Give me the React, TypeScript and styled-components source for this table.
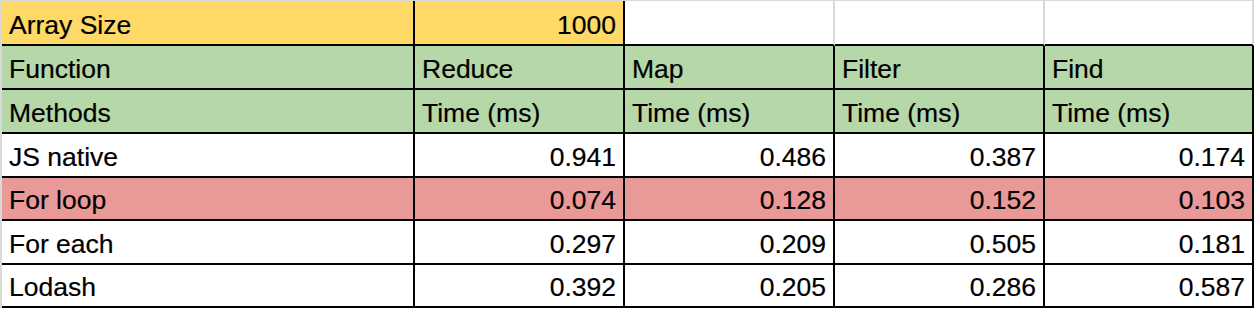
import React from 'react';
import styled, { createGlobalStyle } from 'styled-components';

const GlobalStyle = createGlobalStyle`
  html, body {
    margin: 0;
    padding: 0;
    background: #fff;
  }
`;

const Sheet = styled.div`
  display: grid;
  grid-template-columns: 413px 210px 210px 210px 209px;
  grid-template-rows: 45px 44px 44px 44px 43px 44px 43px;
  width: max-content;
  border-left: 2px solid #d9d9d9;
  border-top: 1px solid #d9d9d9;
  font-family: "Liberation Sans", Arial, sans-serif;
  font-size: 26.5px;
  line-height: 30px;
  color: #000;
  -webkit-text-stroke: 0.2px #000;
`;

const Cell = styled.div<{ $bg?: string; $right?: boolean; $grid?: boolean }>`
  box-sizing: border-box;
  display: flex;
  align-items: flex-end;
  justify-content: ${(p) => (p.$right ? 'flex-end' : 'flex-start')};
  padding: 0 7px 4px 7px;
  background: ${(p) => p.$bg || '#fff'};
  border-right: 2px solid ${(p) => (p.$grid ? '#d9d9d9' : '#000')};
  border-bottom: 2px solid #000;
  white-space: nowrap;
`;

const YELLOW = '#ffd966';
const GREEN = '#b6d7a8';
const RED = '#ea9999';

type DataRow = { label: string; values: string[]; bg?: string };

const rows: DataRow[] = [
  { label: 'JS native', values: ['0.941', '0.486', '0.387', '0.174'] },
  { label: 'For loop', values: ['0.074', '0.128', '0.152', '0.103'], bg: RED },
  { label: 'For each', values: ['0.297', '0.209', '0.505', '0.181'] },
  { label: 'Lodash', values: ['0.392', '0.205', '0.286', '0.587'] },
];

const functions = ['Reduce', 'Map', 'Filter', 'Find'];

const App = () => {
  return (
    <>
      <GlobalStyle />
      <Sheet>
        <Cell $bg={YELLOW}>Array Size</Cell>
        <Cell $bg={YELLOW} $right>1000</Cell>
        <Cell $grid />
        <Cell $grid />
        <Cell $grid />

        <Cell $bg={GREEN}>Function</Cell>
        {functions.map((f) => (
          <Cell key={f} $bg={GREEN}>{f}</Cell>
        ))}

        <Cell $bg={GREEN}>Methods</Cell>
        {functions.map((f) => (
          <Cell key={f} $bg={GREEN}>Time (ms)</Cell>
        ))}

        {rows.map((r) => (
          <React.Fragment key={r.label}>
            <Cell $bg={r.bg}>{r.label}</Cell>
            {r.values.map((v, i) => (
              <Cell key={i} $bg={r.bg} $right>{v}</Cell>
            ))}
          </React.Fragment>
        ))}
      </Sheet>
    </>
  );
};

export default App;
